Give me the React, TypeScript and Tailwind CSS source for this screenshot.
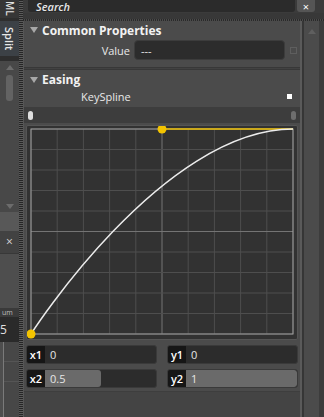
import React from 'react';

const GRID_W = 262;
const GRID_H = 205;
const GX = 5;
const GY = 4;

const Triangle = () => (
    <svg width="8" height="7" viewBox="0 0 8 7" className="shrink-0">
        <path d="M0 0 L8 0 L4 6 Z" fill="#a8a8a8" />
    </svg>
);

const LeftStrip = () => (
    <div className="flex w-[19px] shrink-0 flex-col bg-[#3a3a3a]">
        {/* tail of the XAML tab */}
        <div className="flex h-[18px] flex-col items-center justify-end overflow-hidden bg-[#363636] pb-[2px]">
            <span className="text-[10px] leading-none font-semibold text-[#e0e0e0] [writing-mode:vertical-rl]">ML</span>
        </div>
        <div className="h-[3px] bg-[#2e2e2e]" />
        <div className="flex h-[35px] items-center justify-center bg-[#3c4146]">
            <span className="text-[11px] leading-none font-semibold text-[#e8e8e8] [writing-mode:vertical-rl]">Split</span>
        </div>
        <div className="h-[5px] bg-[#2e2e2e]" />

        {/* scroll area */}
        <div className="flex h-[151px] flex-col items-center bg-[#484848] pt-[4px]">
            <svg width="8" height="5" viewBox="0 0 8 5"><path d="M0 5 L4 0 L8 5 Z" fill="#6c6c6c" /></svg>
            <div className="mt-[5px] h-[26px] w-[7px] rounded-[3px] bg-[#636363]" />
            <div className="flex-1" />
            <svg width="8" height="5" viewBox="0 0 8 5" className="mb-[3px]"><path d="M0 0 L8 0 L4 5 Z" fill="#6c6c6c" /></svg>
        </div>
        <div className="h-[19px] bg-[#585858]" />
        <div className="flex h-[22px] items-center justify-center bg-[#424242] text-[12px] leading-none text-[#d8d8d8]">×</div>

        {/* lower panel */}
        <div className="flex flex-1 flex-col bg-[#4e4e4e]">
            <div className="h-[55px] border-t border-[#383838]" />
            <div className="flex h-[9px] items-center bg-[#3a3a3a] pl-[2px] text-[7px] leading-none text-[#bdbdbd]">um</div>
            <div className="flex h-[25px] items-center bg-[#2a2a2a] text-[12px] leading-none text-[#e0e0e0]">5</div>
            <div className="ml-[3px] flex flex-1 flex-col border-l border-[#7a7a7a] bg-[#474747]">
                <div className="h-[20px] border-b border-[#555]" />
                <div className="h-[20px] border-b border-[#555]" />
            </div>
        </div>
    </div>
);

const Graph = () => {
    const cols = Array.from({ length: 11 }, (_, i) => GX + (GRID_W / 10) * i);
    const rows = Array.from({ length: 11 }, (_, i) => GY + (GRID_H / 10) * i);
    const x0 = GX;
    const y0 = GY + GRID_H;
    const x3 = GX + GRID_W;
    const y3 = GY;
    const c2x = GX + GRID_W * 0.5;
    return (
        <div className="mx-[2px] mt-[2px] h-[215px] w-[272px] rounded-[2px] border border-[#555] bg-[#323232]">
            <svg width="270" height="213" viewBox="1 1 270 213" className="block">
                {cols.map((x, i) => (
                    <line key={'c' + i} x1={x} y1={GY} x2={x} y2={GY + GRID_H} stroke={i === 5 ? '#747474' : '#4e4e4e'} strokeWidth="1" />
                ))}
                {rows.map((y, i) => (
                    <line key={'r' + i} x1={GX} y1={y} x2={GX + GRID_W} y2={y} stroke={i === 5 ? '#747474' : '#4e4e4e'} strokeWidth="1" />
                ))}
                <rect x={GX} y={GY} width={GRID_W} height={GRID_H} fill="none" stroke="#a0a0a0" strokeWidth="1" />
                <path d={`M${c2x} ${y3} L${x3} ${y3}`} stroke="#e8bb00" strokeWidth="1.5" />
                <path d={`M${x0} ${y0} C${x0} ${y0} ${c2x} ${y3} ${x3} ${y3}`} fill="none" stroke="#ececec" strokeWidth="1.5" />
                <circle cx={x0} cy={y0} r="4.5" fill="#f4c400" />
                <circle cx={c2x} cy={y3} r="4.5" fill="#f4c400" />
            </svg>
        </div>
    );
};

const NumField = ({ label, value, fill }: { label: string; value: string; fill: number }) => (
    <div className="flex h-[19px] w-[131px] overflow-hidden rounded-[3px] border border-[#3a3a3a] bg-[#2c2c2c]">
        <div className="flex w-[18px] shrink-0 items-center justify-center bg-[#161616] text-[11px] leading-none font-semibold text-white">{label}</div>
        <div className="relative flex-1">
            {fill > 0 && (
                <div className="absolute inset-y-0 left-0 rounded-r-[3px] bg-[#6a6a6a]" style={{ width: `${fill * 100}%` }} />
            )}
            <span className="absolute left-[5px] top-[3px] text-[11px] leading-none text-[#e6e6e6]">{value}</span>
        </div>
    </div>
);

const Panel = () => (
    <div className="flex w-[277px] shrink-0 flex-col border-l border-[#565656] bg-[#4b4b4b]">
        {/* Common Properties */}
        <div className="flex h-[46px] flex-col">
            <div className="flex h-[18px] items-center gap-[4px] pl-[6px] pt-[1px]">
                <Triangle />
                <span className="text-[12px] leading-none font-bold text-[#f2f2f2]">Common Properties</span>
            </div>
            <div className="mt-[1px] flex h-[20px] items-center">
                <span className="w-[106px] text-right text-[11px] leading-none text-[#e8e8e8]">Value</span>
                <div className="ml-[4px] flex h-[20px] w-[151px] items-center rounded-[4px] border border-[#3c3c3c] bg-[#2c2c2c] pl-[6px] text-[11px] leading-none text-[#e8e8e8]">---</div>
                <div className="ml-[5px] h-[7px] w-[7px] border border-[#5e5e5e]" />
            </div>
        </div>
        <div className="h-[3px] border-y border-[#383838] bg-[#424242]" />

        {/* Easing */}
        <div className="flex flex-1 flex-col">
            <div className="flex h-[18px] items-center gap-[4px] pl-[6px] pt-[2px]">
                <Triangle />
                <span className="text-[12px] leading-none font-bold text-[#f2f2f2]">Easing</span>
            </div>
            <div className="flex h-[16px] items-center">
                <span className="ml-[57px] text-[11px] leading-none text-[#e8e8e8]">KeySpline</span>
                <div className="ml-auto mr-[8px] h-[5px] w-[5px] bg-white" />
            </div>
            <div className="mt-[3px] flex h-[16px] items-center justify-between bg-[#3d3d3d] px-[4px]">
                <div className="h-[9px] w-[5px] rounded-full bg-[#dedede]" />
                <div className="h-[9px] w-[5px] rounded-full bg-[#6e6e6e]" />
            </div>
            <Graph />
            <div className="mt-[5px] flex justify-between px-[2px]">
                <NumField label="x1" value="0" fill={0} />
                <NumField label="y1" value="0" fill={0} />
            </div>
            <div className="mt-[5px] flex justify-between px-[2px]">
                <NumField label="x2" value="0.5" fill={0.5} />
                <NumField label="y2" value="1" fill={1} />
            </div>
            <div className="mt-[3px] flex-1 border-t border-[#3e3e3e] bg-[#444]" />
        </div>
    </div>
);

const RightScroll = () => (
    <div className="flex flex-1">
        <div className="w-[2px] bg-[#5a5a5a]" />
        <div className="w-[2px] bg-[#363636]" />
        <div className="flex w-[15px] flex-col items-center bg-[#4b4b4b] pt-[8px]">
            <svg width="8" height="5" viewBox="0 0 8 5"><path d="M0 5 L4 0 L8 5 Z" fill="#5f5f5f" /></svg>
        </div>
        <div className="flex-1 bg-[#3c3c3c]" />
    </div>
);

export default function App() {
    return (
        <div className="flex h-[417px] w-[324px] overflow-hidden bg-[#3a3a3a] font-['Open_Sans',sans-serif] text-white select-none">
            <LeftStrip />
            <div className="w-[4px] shrink-0 bg-[repeating-linear-gradient(to_bottom,#262626_0px,#262626_1px,#5a5a5a_1px,#5a5a5a_2px)]" />
            <div className="flex min-w-0 flex-1 flex-col">
                {/* Search row */}
                <div className="flex h-[13px] shrink-0 items-start bg-[#3b3b3b]">
                    <div className="ml-[5px] flex h-[12px] w-[267px] items-center rounded-b-[3px] bg-[#2b2b2b] pl-[8px] text-[11px] leading-none font-semibold italic text-[#e8e8e8]">Search</div>
                    <div className="ml-[2px] flex h-[12px] w-[18px] items-center justify-center rounded-b-[3px] bg-[#555] text-[11px] leading-none text-white">×</div>
                </div>
                <div className="h-[8px] shrink-0 bg-[#383838] bg-[repeating-linear-gradient(to_right,#2a2a2a_0px,#2a2a2a_1px,#4a4a4a_1px,#4a4a4a_2px)] bg-[length:100%_2px] bg-bottom bg-no-repeat" />
                <div className="flex min-h-0 flex-1">
                    <Panel />
                    <RightScroll />
                </div>
            </div>
        </div>
    );
}
